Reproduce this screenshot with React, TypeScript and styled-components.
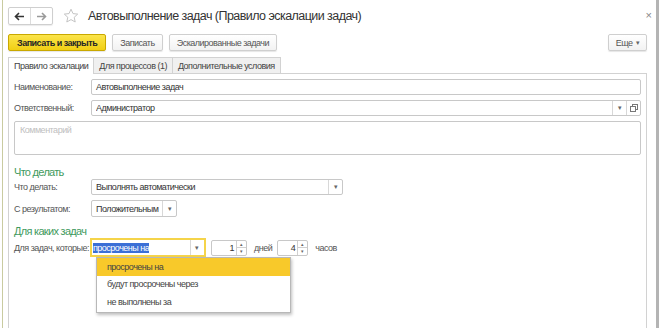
import React, { useState } from "react";
import styled, { createGlobalStyle, css } from "styled-components";

const GlobalStyle = createGlobalStyle`
  html, body {
    margin: 0;
    padding: 0;
    background: #fff;
    font-family: "Liberation Sans", Arial, sans-serif;
  }
`;

// 1C forms use a tight small font
const smallText = css`
  font-size: 9px;
  letter-spacing: -0.5px;
`;

const dropdownItems = ["просрочены на", "будут просрочены через", "не выполнены за"];

const App = () => {
  const [selected, setSelected] = useState(0);

  return (
    <>
      <GlobalStyle />
      <Frame>
        <Window>
          <Header>
            <NavGroup>
              <NavButton>
                <svg width="11" height="9" viewBox="0 0 11 9">
                  <path d="M10 4.5H2.5M5 1L1.5 4.5L5 8" stroke="#333" strokeWidth="1.6" fill="none" />
                </svg>
              </NavButton>
              <NavButton>
                <svg width="11" height="9" viewBox="0 0 11 9">
                  <path d="M1 4.5H8.5M6 1L9.5 4.5L6 8" stroke="#9a9a9a" strokeWidth="1.6" fill="none" />
                </svg>
              </NavButton>
            </NavGroup>
            <Star>
              <svg width="16" height="16" viewBox="0 0 16 16">
                <path
                  d="M8 1.2l2 4.4 4.7.5-3.5 3.2 1 4.7L8 11.6 3.8 14l1-4.7L1.3 6.1l4.7-.5z"
                  fill="none"
                  stroke="#c4c4c4"
                  strokeWidth="1"
                />
              </svg>
            </Star>
            <Title>Автовыполнение задач (Правило эскалации задач)</Title>
            <Close>×</Close>
          </Header>

          <Toolbar>
            <Button $primary>Записать и закрыть</Button>
            <Button>Записать</Button>
            <Button>Эскалированные задачи</Button>
            <Spacer />
            <Button>
              Еще <Caret>▾</Caret>
            </Button>
          </Toolbar>

          <Tabs>
            <Tab $active>Правило эскалации</Tab>
            <Tab>Для процессов (1)</Tab>
            <Tab>Дополнительные условия</Tab>
            <TabFill />
          </Tabs>

          <Panel>
            <Row>
              <Label>Наименование:</Label>
              <Input>Автовыполнение задач</Input>
            </Row>
            <Row>
              <Label>Ответственный:</Label>
              <Input>
                <InputText>Администратор</InputText>
                <FieldButton>▾</FieldButton>
                <FieldButton>
                  <svg width="8" height="8" viewBox="0 0 8 8">
                    <rect x="2.5" y="0.5" width="5" height="5" fill="#fff" stroke="#777" />
                    <rect x="0.5" y="2.5" width="5" height="5" fill="#fff" stroke="#777" />
                  </svg>
                </FieldButton>
              </Input>
            </Row>
            <Comment>Комментарий</Comment>

            <SectionTitle $gap={11}>Что делать</SectionTitle>
            <Row>
              <Label>Что делать:</Label>
              <Input $width={252}>
                <InputText>Выполнять автоматически</InputText>
                <FieldButton>▾</FieldButton>
              </Input>
            </Row>
            <Row>
              <Label>С результатом:</Label>
              <Input $width={86} $height={17}>
                <InputText>Положительным</InputText>
                <FieldButton>▾</FieldButton>
              </Input>
            </Row>

            <SectionTitle $gap={3}>Для каких задач</SectionTitle>
            <TaskRow>
              <TaskLabel>Для задач, которые:</TaskLabel>
              <ComboWrap>
                <Combo>
                  <InputText>
                    <Selection>{dropdownItems[selected]}</Selection>
                  </InputText>
                  <FieldButton>▾</FieldButton>
                </Combo>
                <DropList>
                  {dropdownItems.map((item, i) => (
                    <DropItem key={item} $active={i === selected} onClick={() => setSelected(i)}>
                      {item}
                    </DropItem>
                  ))}
                </DropList>
              </ComboWrap>
              <Spin $width={36}>
                <SpinValue>1</SpinValue>
                <SpinArrows>
                  <span>▴</span>
                  <span>▾</span>
                </SpinArrows>
              </Spin>
              <Unit>дней</Unit>
              <Spin $width={31}>
                <SpinValue>4</SpinValue>
                <SpinArrows>
                  <span>▴</span>
                  <span>▾</span>
                </SpinArrows>
              </Spin>
              <Unit>часов</Unit>
            </TaskRow>
          </Panel>
        </Window>
      </Frame>
    </>
  );
};

export default App;

const Frame = styled.div`
  width: 661px;
  height: 328px;
  box-sizing: border-box;
  padding-left: 2px;
  overflow: hidden;
  display: flex;
`;

const Window = styled.div`
  width: 657px;
  height: 328px;
  box-sizing: border-box;
  border-left: 1px solid #c9cba0;
  border-right: 3px solid #b4b4b4;
  padding: 0 9px 0 5px;
  display: flex;
  flex-direction: column;
`;

const Header = styled.div`
  display: flex;
  align-items: center;
  height: 18px;
  margin-top: 7px;
`;

const NavGroup = styled.div`
  display: flex;
  border: 1px solid #cfcfcf;
  border-radius: 2px;
  box-shadow: 0 1px 1px rgba(0, 0, 0, 0.08);
  height: 16px;
`;

const NavButton = styled.div`
  width: 21px;
  display: flex;
  align-items: center;
  justify-content: center;
  & + & {
    border-left: 1px solid #dcdcdc;
  }
`;

const Star = styled.div`
  margin-left: 10px;
  display: flex;
  align-items: center;
`;

const Title = styled.div`
  margin-left: 9px;
  font-size: 12.5px;
  letter-spacing: -0.55px;
  color: #333;
  white-space: nowrap;
`;

const Close = styled.div`
  margin-left: auto;
  margin-right: -5px;
  font-size: 11px;
  color: #888;
  margin-top: -3px;
`;

const Toolbar = styled.div`
  display: flex;
  align-items: center;
  gap: 6px;
  margin-top: 9px;
  height: 17px;
`;

const Button = styled.div<{ $primary?: boolean }>`
  height: 17px;
  box-sizing: border-box;
  padding: 0 ${(p) => (p.$primary ? 8 : 7)}px;
  display: flex;
  align-items: center;
  ${smallText}
  white-space: nowrap;
  border-radius: 2px;
  color: ${(p) => (p.$primary ? "#262626" : "#555")};
  font-weight: ${(p) => (p.$primary ? "bold" : "normal")};
  background: ${(p) => (p.$primary ? "linear-gradient(#fbe44a, #f1cf14)" : "linear-gradient(#fff, #f2f2f2)")};
  border: 1px solid ${(p) => (p.$primary ? "#c9a800" : "#cfcfcf")};
  box-shadow: 0 1px 1px rgba(0, 0, 0, 0.1);
`;

const Spacer = styled.div`
  flex: 1;
`;

const Caret = styled.span`
  font-size: 7px;
  margin-left: 3px;
  color: #666;
`;

const Tabs = styled.div`
  display: flex;
  margin-top: 6px;
  height: 17px;
`;

const Tab = styled.div<{ $active?: boolean }>`
  box-sizing: border-box;
  padding: 0 5px;
  display: flex;
  align-items: center;
  ${smallText}
  color: #444;
  white-space: nowrap;
  border: 1px solid #d2d2d2;
  border-bottom: ${(p) => (p.$active ? "none" : "1px solid #d2d2d2")};
  background: ${(p) => (p.$active ? "#fff" : "#f0f0f0")};
  & + & {
    margin-left: -1px;
  }
`;

const TabFill = styled.div`
  flex: 1;
  border-bottom: 1px solid #d2d2d2;
`;

const Panel = styled.div`
  flex: 1;
  border: 1px solid #d2d2d2;
  border-top: none;
  border-bottom: none;
  padding: 5px 5px 0 5px;
  display: flex;
  flex-direction: column;
`;

const Row = styled.div`
  display: flex;
  align-items: center;
  margin-bottom: 5px;
`;

const Label = styled.div`
  width: 77px;
  flex-shrink: 0;
  ${smallText}
  color: #555;
`;

const Input = styled.div<{ $width?: number; $height?: number }>`
  ${(p) => (p.$width ? `width: ${p.$width}px;` : "flex: 1;")}
  height: ${(p) => p.$height ?? 16}px;
  box-sizing: border-box;
  border: 1px solid #c8c8c8;
  border-radius: 2px;
  display: flex;
  align-items: center;
  padding-left: 4px;
  ${smallText}
  color: #333;
  background: #fff;
`;

const InputText = styled.div`
  flex: 1;
  white-space: nowrap;
  overflow: hidden;
`;

const FieldButton = styled.div`
  width: 13px;
  height: 100%;
  border-left: 1px solid #d8d8d8;
  display: flex;
  align-items: center;
  justify-content: center;
  font-size: 7px;
  letter-spacing: 0;
  color: #666;
`;

const Comment = styled.div`
  height: 34px;
  box-sizing: border-box;
  border: 1px solid #c8c8c8;
  border-radius: 2px;
  padding: 3px 5px;
  ${smallText}
  color: #c0c0c0;
`;

const SectionTitle = styled.div<{ $gap: number }>`
  margin-top: ${(p) => p.$gap}px;
  margin-bottom: 1px;
  font-size: 11px;
  letter-spacing: -0.7px;
  color: #3f9a5e;
  line-height: 12px;
`;

const TaskRow = styled.div`
  display: flex;
  align-items: center;
`;

const TaskLabel = styled.div`
  ${smallText}
  color: #555;
  white-space: nowrap;
  margin-right: 1px;
`;

const ComboWrap = styled.div`
  position: relative;
`;

const Combo = styled.div`
  width: 116px;
  height: 19px;
  box-sizing: border-box;
  border: 2px solid #f5d44a;
  display: flex;
  align-items: center;
  padding-left: 1px;
  ${smallText}
  background: #fff;
`;

const Selection = styled.span`
  background: #3b6fd6;
  color: #fff;
  padding: 1px 0;
`;

const DropList = styled.div`
  position: absolute;
  left: 6px;
  top: 19px;
  width: 195px;
  box-sizing: border-box;
  border: 1px solid #b8b8b8;
  background: #fff;
  box-shadow: 1px 2px 3px rgba(0, 0, 0, 0.25);
  z-index: 2;
  padding-bottom: 1px;
`;

const DropItem = styled.div<{ $active?: boolean }>`
  height: 17.5px;
  display: flex;
  align-items: center;
  padding-left: 10px;
  ${smallText}
  color: #444;
  background: ${(p) => (p.$active ? "#f8c92a" : "#fff")};
  cursor: default;
`;

const Spin = styled.div<{ $width: number }>`
  width: ${(p) => p.$width}px;
  height: 16px;
  box-sizing: border-box;
  margin-left: 5px;
  border: 1px solid #c8c8c8;
  border-radius: 2px;
  display: flex;
  ${smallText}
  color: #333;
`;

const SpinValue = styled.div`
  flex: 1;
  text-align: right;
  padding-right: 2px;
  line-height: 14px;
`;

const SpinArrows = styled.div`
  width: 9px;
  border-left: 1px solid #d0d0d0;
  display: flex;
  flex-direction: column;
  font-size: 5px;
  letter-spacing: 0;
  color: #666;
  & > span {
    flex: 1;
    display: flex;
    align-items: center;
    justify-content: center;
  }
  & > span + span {
    border-top: 1px solid #d0d0d0;
  }
`;

const Unit = styled.div`
  margin-left: 7px;
  ${smallText}
  color: #555;
`;
